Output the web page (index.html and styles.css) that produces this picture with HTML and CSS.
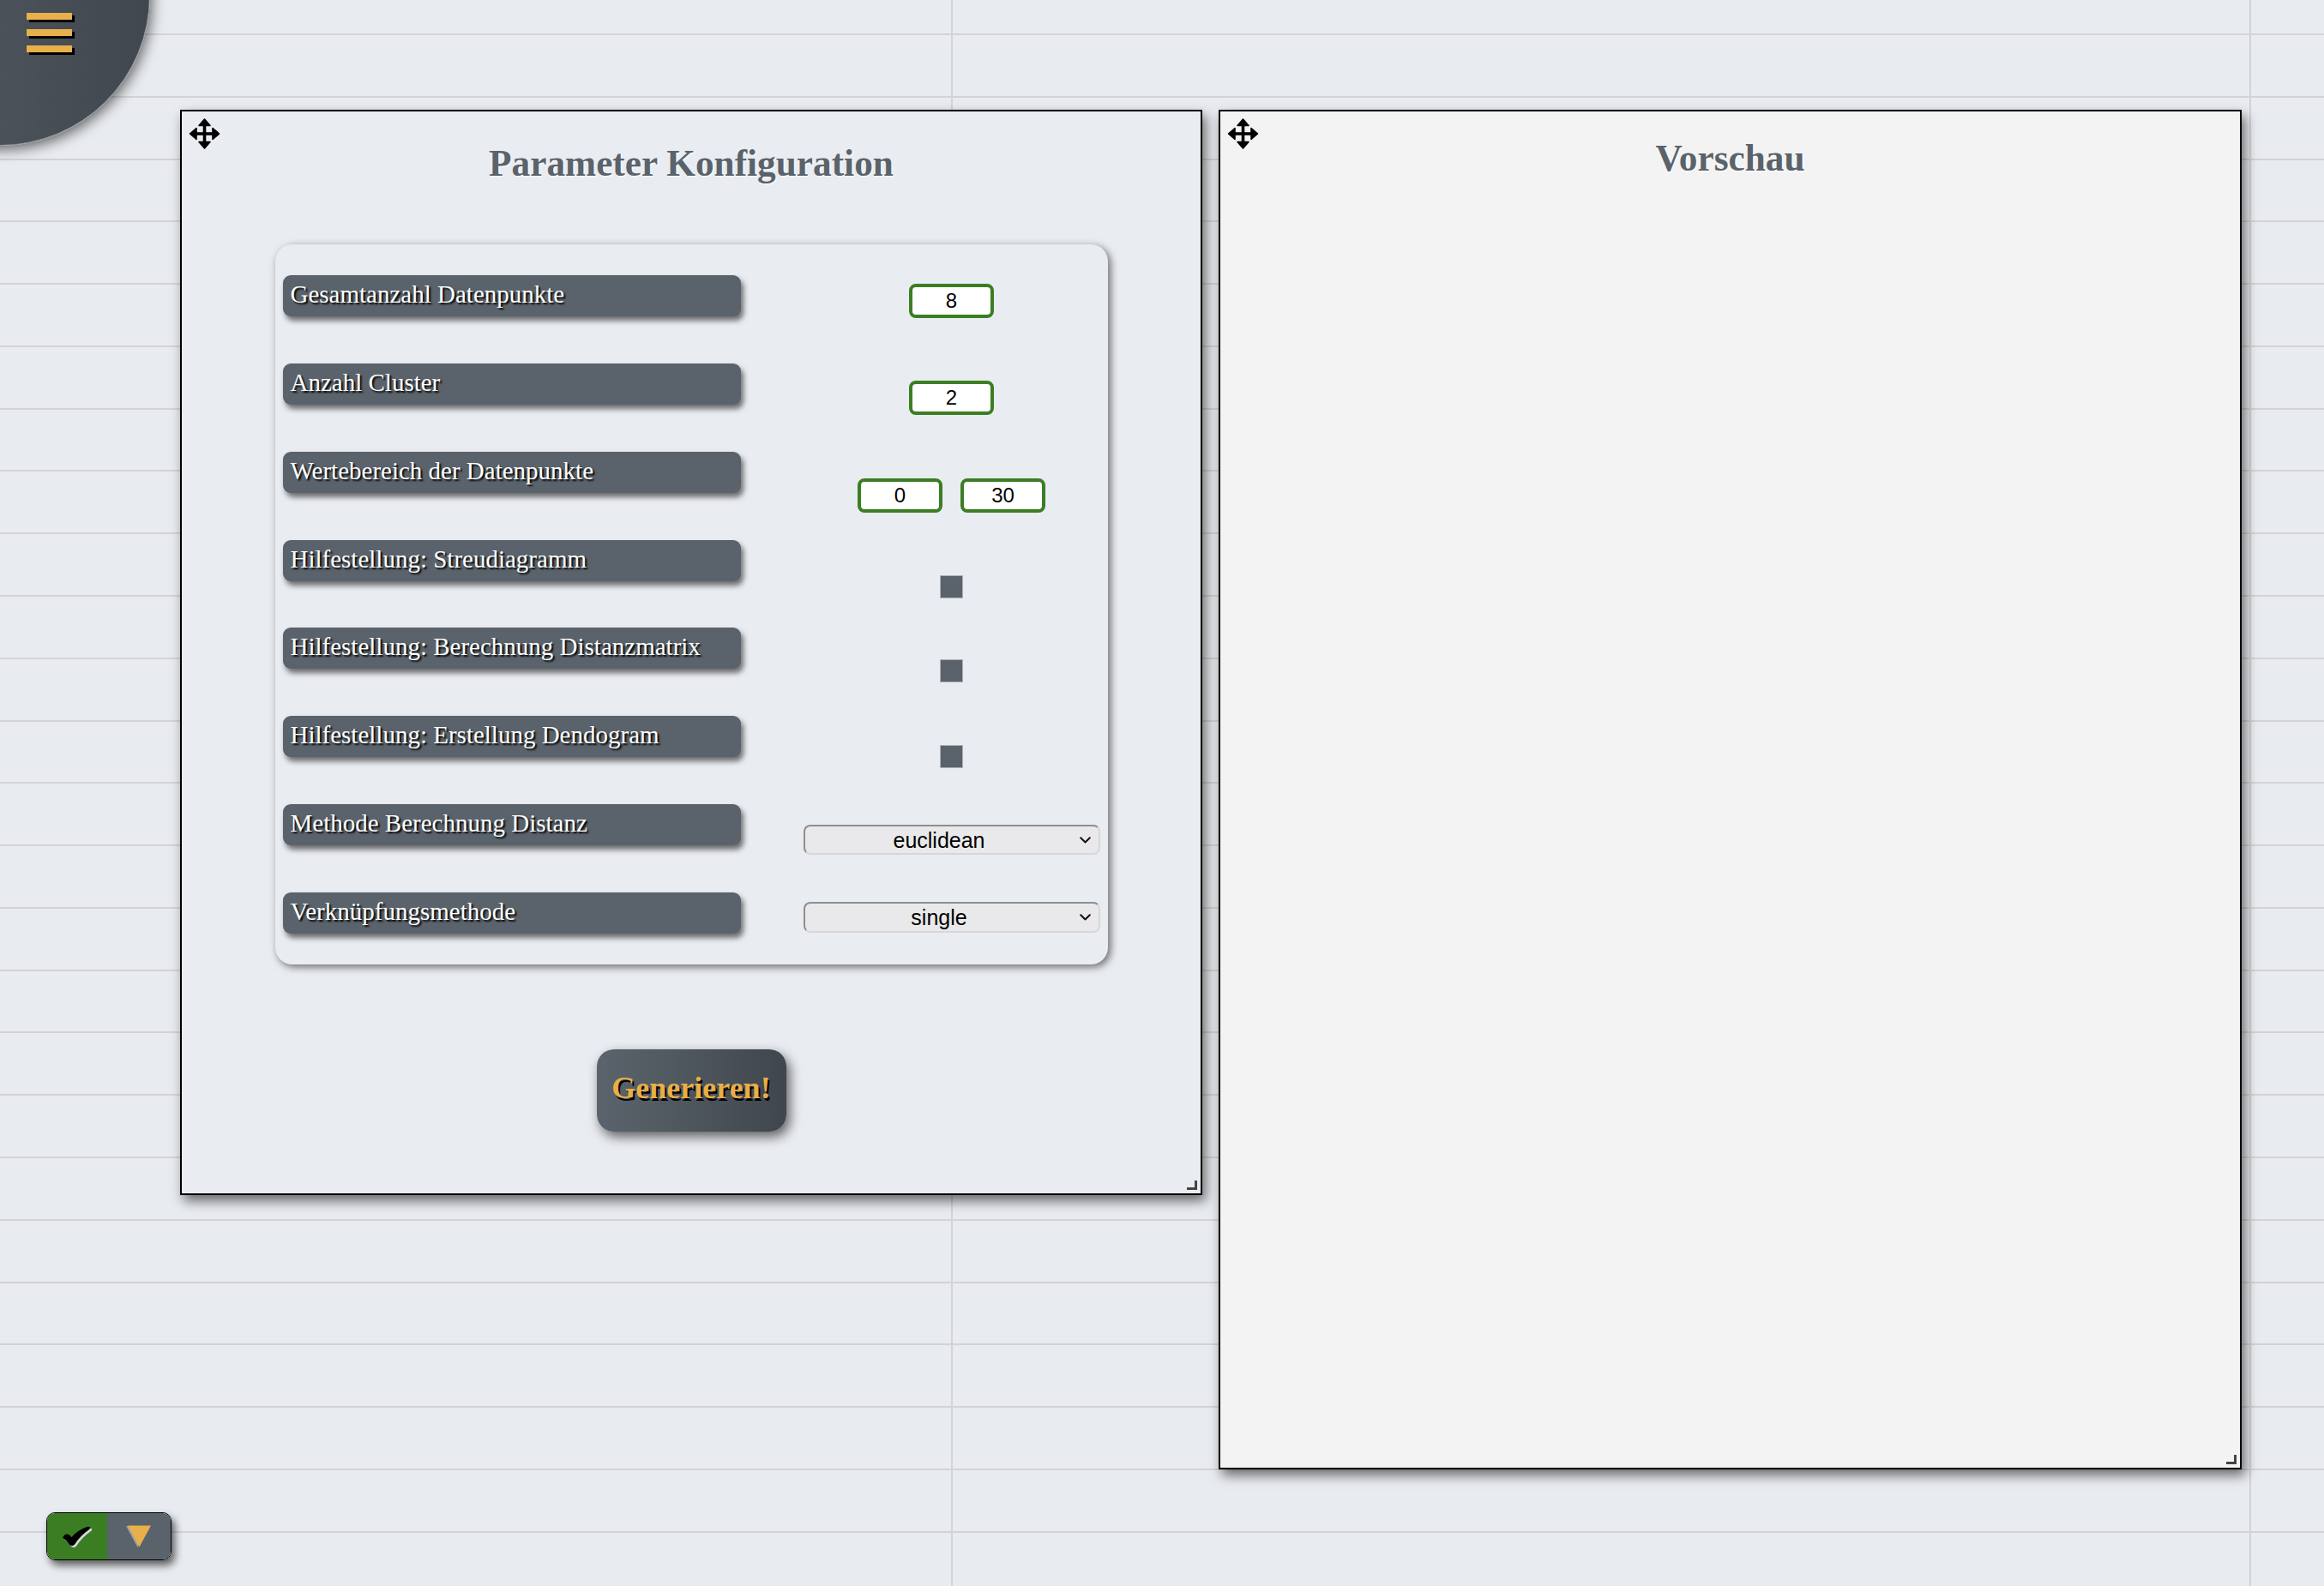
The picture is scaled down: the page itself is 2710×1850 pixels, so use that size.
FILE: index.html
```html
<!DOCTYPE html>
<html lang="de">
<head>
<meta charset="utf-8">
<title>Clustering – Parameter</title>
<link rel="stylesheet" href="styles.css">
</head>
<body>
<div class="desk">
  <div class="menu">
    <span class="bar"></span>
    <span class="bar"></span>
    <span class="bar"></span>
  </div>

  <section class="win win-config">
    <svg class="move" viewBox="0 0 36 36" width="37" height="36" aria-hidden="true">
      <g fill="#000" stroke="#000" stroke-width="1.6" stroke-linejoin="round">
        <rect x="16.2" y="5" width="3.6" height="26" stroke="none"/>
        <rect x="5" y="16.2" width="26" height="3.6" stroke="none"/>
        <polygon points="18,1 24.5,8.5 11.5,8.5"/>
        <polygon points="18,35 24.5,27.5 11.5,27.5"/>
        <polygon points="1,18 8.5,11.5 8.5,24.5"/>
        <polygon points="35,18 27.5,11.5 27.5,24.5"/>
      </g>
    </svg>
    <h2 class="win-title title-config">Parameter Konfiguration</h2>

    <div class="card">
      <div class="label">Gesamtanzahl Datenpunkte</div>
      <div class="cell r1"><input class="num" type="text" value="8"></div>

      <div class="label">Anzahl Cluster</div>
      <div class="cell r2"><input class="num" type="text" value="2"></div>

      <div class="label">Wertebereich der Datenpunkte</div>
      <div class="cell r3 pair"><input class="num" type="text" value="0"><input class="num" type="text" value="30"></div>

      <div class="label">Hilfestellung: Streudiagramm</div>
      <div class="cell r4"><input class="box" type="checkbox"></div>

      <div class="label">Hilfestellung: Berechnung Distanzmatrix</div>
      <div class="cell r5"><input class="box" type="checkbox"></div>

      <div class="label">Hilfestellung: Erstellung Dendogram</div>
      <div class="cell r6"><input class="box" type="checkbox"></div>

      <div class="label">Methode Berechnung Distanz</div>
      <div class="cell r7">
        <div class="pick">
          <select class="sel"><option>euclidean</option></select>
          <svg class="chev" viewBox="0 0 13 8" width="13" height="8" aria-hidden="true"><path d="M1.2 1.2 L6.5 6.5 L11.8 1.2" fill="none" stroke="#111" stroke-width="2" stroke-linecap="round" stroke-linejoin="round"/></svg>
        </div>
      </div>

      <div class="label">Verknüpfungsmethode</div>
      <div class="cell r8">
        <div class="pick">
          <select class="sel"><option>single</option></select>
          <svg class="chev" viewBox="0 0 13 8" width="13" height="8" aria-hidden="true"><path d="M1.2 1.2 L6.5 6.5 L11.8 1.2" fill="none" stroke="#111" stroke-width="2" stroke-linecap="round" stroke-linejoin="round"/></svg>
        </div>
      </div>
    </div>

    <button class="generate" type="button">Generieren!</button>
    <span class="grip"></span>
  </section>

  <section class="win win-preview">
    <svg class="move" viewBox="0 0 36 36" width="37" height="36" aria-hidden="true">
      <g fill="#000" stroke="#000" stroke-width="1.6" stroke-linejoin="round">
        <rect x="16.2" y="5" width="3.6" height="26" stroke="none"/>
        <rect x="5" y="16.2" width="26" height="3.6" stroke="none"/>
        <polygon points="18,1 24.5,8.5 11.5,8.5"/>
        <polygon points="18,35 24.5,27.5 11.5,27.5"/>
        <polygon points="1,18 8.5,11.5 8.5,24.5"/>
        <polygon points="35,18 27.5,11.5 27.5,24.5"/>
      </g>
    </svg>
    <h2 class="win-title title-preview">Vorschau</h2>
    <span class="grip"></span>
  </section>

  <div class="toggle">
    <span class="t-ok">
      <svg viewBox="0 0 35 24" width="35" height="24" aria-hidden="true">
        <path transform="translate(2 2)" fill="#d6d6d6" stroke="#d6d6d6" stroke-width="1.4" stroke-linejoin="round" d="M1 12.5 Q3.5 7.5 7.5 10 L10.5 13 Q18 4 29.5 0.5 Q32.5 0 31 2.2 Q20 10 13.5 20 Q11 22.5 8.5 20.2 Q5 15 1 12.5 Z"/>
        <path fill="#000" stroke="#000" stroke-width="1.4" stroke-linejoin="round" d="M1 12.5 Q3.5 7.5 7.5 10 L10.5 13 Q18 4 29.5 0.5 Q32.5 0 31 2.2 Q20 10 13.5 20 Q11 22.5 8.5 20.2 Q5 15 1 12.5 Z"/>
      </svg>
    </span>
    <span class="t-drop">
      <svg viewBox="0 0 31 27" width="31" height="27" aria-hidden="true">
        <polygon points="1,1 28,1 14.5,26" fill="#b8bcc0" opacity="0.7"/>
        <polygon points="3,0.5 30,0.5 16.5,25.5" fill="#e8b04a"/>
      </svg>
    </span>
  </div>
</div>
</body>
</html>
```

FILE: styles.css
```css
* { box-sizing: border-box; }

html, body {
  margin: 0;
  padding: 0;
  background: #e8ebef;
}

.desk {
  position: relative;
  width: 2710px;
  height: 1850px;
  overflow: hidden;
  background-color: #e8ebef;
  background-image:
    linear-gradient(to right,
      transparent 1109px, #d3d3d7 1109px, #d3d3d7 1111px, transparent 1111px,
      transparent 2623px, #d3d3d7 2623px, #d3d3d7 2625px, transparent 2625px),
    repeating-linear-gradient(to bottom,
      transparent 0, transparent 39px, #d3d3d7 39px, #d3d3d7 41px, transparent 41px, transparent 72.78px);
  font-family: "Liberation Serif", "Times New Roman", serif;
}

/* hamburger quarter circle */
.menu {
  position: absolute;
  left: -175px;
  top: -180px;
  width: 350px;
  height: 350px;
  border-radius: 50%;
  background: linear-gradient(to right, #555c64, #41474e);
  border: 1px solid #8b9096;
  box-shadow: 2px 4px 16px rgba(0, 0, 0, 0.6);
  z-index: 5;
}
.menu .bar {
  position: absolute;
  left: 205px;
  width: 53px;
  height: 8px;
  background: #e8b04a;
  box-shadow: 3px 3px 0 #000;
}
.menu .bar:nth-child(1) { top: 194px; }
.menu .bar:nth-child(2) { top: 213px; }
.menu .bar:nth-child(3) { top: 232px; }

/* windows */
.win {
  position: absolute;
  top: 128px;
  border: 2px solid #000;
  box-shadow: 4px 7px 13px rgba(0, 0, 0, 0.55);
  display: flex;
  flex-direction: column;
  align-items: center;
}
.win-config {
  left: 210px;
  width: 1192px;
  height: 1266px;
  background: #e9ecf0;
}
.win-preview {
  left: 1421px;
  width: 1193px;
  height: 1586px;
  background: #f3f3f3;
}

.move {
  position: absolute;
  left: 8px;
  top: 8px;
}

.win-title {
  margin: 0;
  font-family: "Liberation Serif", "Times New Roman", serif;
  font-weight: bold;
  font-size: 43.3px;
  line-height: 50px;
  color: #5a636b;
  text-shadow: 1px 1px 2px #ffffff;
}
.title-config { margin-top: 35px; }
.title-preview { margin-top: 29px; }

.grip {
  position: absolute;
  right: 4px;
  bottom: 4px;
  width: 12px;
  height: 11px;
  border-right: 3px solid #444;
  border-bottom: 3px solid #444;
}

/* parameter card */
.card {
  margin-top: 70px;
  width: 971px;
  padding: 36px 9px 36px 9px;
  display: grid;
  grid-template-columns: 534px 346px;
  grid-auto-rows: 48px;
  column-gap: 73px;
  row-gap: 54.86px;
  background: #e9ecf0;
  border-radius: 20px;
  box-shadow: 3px 3px 10px rgba(0, 0, 0, 0.55);
}

.label {
  height: 48px;
  padding: 6px 9px 0 9px;
  background: #5a636b;
  border-radius: 9px;
  color: #ffffff;
  font-size: 29px;
  line-height: 33px;
  white-space: nowrap;
  text-shadow: 2px 2px 2px #000;
  box-shadow: 3px 5px 6px rgba(0, 0, 0, 0.55);
}

.cell {
  display: flex;
  justify-content: center;
  align-items: flex-start;
}
.r1 { padding-top: 10px; }
.r2 { padding-top: 20px; }
.r3 { padding-top: 31px; }
.r4 { padding-top: 41px; }
.r5 { padding-top: 37px; }
.r6 { padding-top: 34px; }
.r7 { padding-top: 24px; }
.r8 { padding-top: 11px; }
.pair { gap: 21px; }

.num {
  width: 99px;
  height: 40px;
  margin: 0;
  padding: 0;
  border: 4px solid #3b7e23;
  border-radius: 8px;
  background: #ffffff;
  color: #000;
  text-align: center;
  font-family: "Liberation Sans", Arial, sans-serif;
  font-size: 24px;
}

.box {
  appearance: none;
  -webkit-appearance: none;
  width: 27px;
  height: 27px;
  margin: 0;
  background: #5a636b;
  border: 1px solid #aeb2b6;
  border-radius: 0;
}

.pick {
  position: relative;
  width: 346px;
  height: 35px;
}
.r8 .pick { height: 36px; }
.sel {
  appearance: none;
  -webkit-appearance: none;
  width: 100%;
  height: 100%;
  margin: 0;
  padding: 0 29px 0 0;
  border: 2px solid;
  border-color: #8e8e8e #d7d7da #d7d7da #8e8e8e;
  border-radius: 8px;
  background: #e9e9eb;
  color: #000;
  font-family: "Liberation Sans", Arial, sans-serif;
  font-size: 25px;
  text-align: center;
  text-align-last: center;
}
.chev {
  position: absolute;
  right: 11px;
  top: 14px;
  pointer-events: none;
}

/* generate button */
.generate {
  margin-top: 99px;
  width: 221px;
  height: 96px;
  padding: 0 0 5px 0;
  border: none;
  border-radius: 20px;
  background: linear-gradient(to right, #5b646c, #40464e);
  box-shadow: 4px 6px 14px rgba(0, 0, 0, 0.6);
  color: #e9ae48;
  font-family: "Liberation Serif", "Times New Roman", serif;
  font-weight: bold;
  font-size: 36px;
  line-height: 41px;
  text-shadow: 2px 3px 0 #000;
}

/* bottom toggle */
.toggle {
  position: absolute;
  left: 54px;
  top: 1764px;
  width: 146px;
  height: 56px;
  display: flex;
  border: 1px solid #000;
  border-radius: 10px;
  overflow: hidden;
  box-shadow: 4px 6px 10px rgba(0, 0, 0, 0.6);
}
.t-ok {
  width: 70px;
  background: #3a7d22;
  display: flex;
  align-items: center;
  justify-content: center;
  padding-top: 2px;
}
.t-drop {
  flex: 1;
  background: #5a636b;
  display: flex;
  align-items: center;
  justify-content: center;
  padding-right: 2px;
}
```
